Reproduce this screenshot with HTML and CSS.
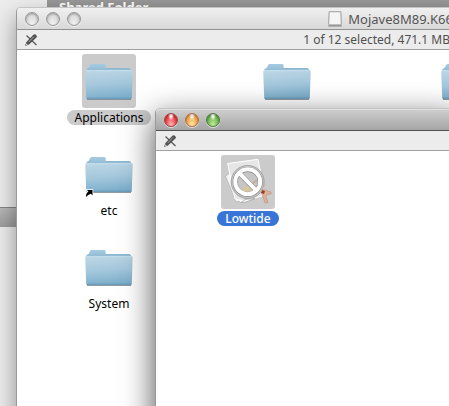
FILE: index.html
```html
<!DOCTYPE html>
<html lang="en">
<head>
  <meta charset="UTF-8" />
  <meta name="viewport" content="width=device-width, initial-scale=1.0" />
  <title>Lowtide</title>
  <link rel="stylesheet" href="styles.css">
</head>
<body>
  <!-- shared icons -->
  <svg class="defs" width="0" height="0" aria-hidden="true">
    <defs>
      <linearGradient id="folderBack" x1="0" y1="0" x2="0" y2="1">
        <stop offset="0" stop-color="#a6cbe0" />
        <stop offset="1" stop-color="#86b3cf" />
      </linearGradient>
      <linearGradient id="folderFront" x1="0.3" y1="0" x2="0.45" y2="1">
        <stop offset="0" stop-color="#bcd6e4" />
        <stop offset="0.5" stop-color="#a4c7dc" />
        <stop offset="1" stop-color="#7aadca" />
      </linearGradient>
      <symbol id="folder" viewBox="0 0 54 54">
        <path d="M5 45.300h44" stroke="#77838a" />
        <path d="M4.500 17V15l2.300-1.200 1.300-2.800q.5-1 1.500-1h12.600q1.500 0 1.500 1.500V14h23.500q1.600 0 1.900 1.500V20h-44.600z" fill="url(#folderBack)" />
        <path d="M24 14.500h23" stroke="#8bb7d1" />
        <path d="M3.200 17.600q.2-1.600 1.700-1.600h44.400q1.600 0 1.400 1.600l-.9 26.400q0 1-1 1H5.200q-1 0-1-1z" fill="url(#folderFront)" />
        <path d="M4 16.700h46" stroke="#c6e0ee" stroke-width=".8" />
        <path d="M4.800 44.200h44.400" stroke="#6497b4" />
      </symbol>
      <symbol id="pencil" viewBox="0 0 12 12">
        <path d="M1.500 1.500l10 9.500" stroke="#5a5a5a" stroke-width="1.300" />
        <path d="M0 12l1.400-4 7-7.200Q9.200 0 10.200.3l1.500 1.400q.5.900-.3 1.800L4 10.400z" fill="#505050" />
        <path d="M3.500 8.200l5.500-5.700" stroke="#a4a4a4" />
        <path d="M1.300 9.200l1.500 1.300-2 .7z" fill="#d8d8d8" />
      </symbol>
    </defs>
  </svg>

  <div class="desktop">
    <div class="backdrop">
      <div class="sidebar"></div>
      <div class="shared-title">Shared Folder</div>
    </div>
    <div class="back-bar"></div>

    <section class="window window-disk">
      <header class="titlebar">
        <div class="lights">
          <button class="light" aria-label="Close"></button>
          <button class="light" aria-label="Minimize"></button>
          <button class="light" aria-label="Zoom"></button>
        </div>
        <div class="title">
          <svg class="disk" viewBox="0 0 14 16">
            <path d="M1 .5h12l.7 13.200v1.800H.3v-1.800z" fill="#c9c9c9" stroke="#a7a7a7" stroke-width=".8" />
            <path d="M2 1.500h10l.5 11.500h-11z" fill="#f5f5f5" />
            <path d="M1 14.300h12" stroke="#8c8c8c" />
          </svg>
          <span>Mojave8M89.K66</span>
        </div>
      </header>
      <div class="toolbar">
        <button class="tool" aria-label="Read only"><svg><use href="#pencil" /></svg></button>
        <span class="status">1 of 12 selected, 471.1 MB</span>
      </div>
      <div class="files">
        <div class="file selected">
          <svg class="icon"><use href="#folder" /></svg>
          <span class="name">Applications</span>
        </div>
        <div class="file"><svg class="icon"><use href="#folder" /></svg></div>
        <div class="file"><svg class="icon"><use href="#folder" /></svg></div>
        <div class="file first">
          <svg class="icon" viewBox="0 0 54 54">
            <use href="#folder" />
            <path d="M4 50q-.3-4 2.500-5.500L5 43h5.500v5.500L8.900 46.700Q6 47.500 4 50z" fill="#000" stroke="#fff" stroke-width="1.500" paint-order="stroke" />
          </svg>
          <span class="name">etc</span>
        </div>
        <div class="file first">
          <svg class="icon"><use href="#folder" /></svg>
          <span class="name">System</span>
        </div>
      </div>
    </section>

    <section class="window window-app active">
      <header class="titlebar">
        <div class="lights">
          <button class="light red" aria-label="Close"></button>
          <button class="light yellow" aria-label="Minimize"></button>
          <button class="light green" aria-label="Zoom"></button>
        </div>
      </header>
      <div class="toolbar">
        <button class="tool" aria-label="Read only"><svg><use href="#pencil" /></svg></button>
      </div>
      <div class="files">
        <div class="file selected">
          <svg class="icon" viewBox="0 0 54 54">
            <!-- papers -->
            <path d="M4.500 21L9 18l14 27-3 3-2-2-3 1z" fill="#f4f4f4" stroke="#aaa" stroke-width=".6" />
            <path d="M6.700 8.500L37 4.300 44 40l-21 6-9-2z" fill="#e6e6e6" stroke="#fff" />
            <path d="M20 47.500l4-3 10-1-9 3.500z" fill="#fafafa" stroke="#999" stroke-width=".6" />
            <!-- brush and clamp -->
            <path d="M40 36l3-2 3 2 4 1v2l-4 .5-1 2 2 6-3 .5-3-9z" fill="#dcb09a" stroke="#c08f78" stroke-width=".6" />
            <path d="M41 35l3 1-1 3-3-1z" fill="#973f22" />
            <path d="M38 24l6 9" stroke="#e0b79b" />
            <circle cx="26.700" cy="27" r="16.500" fill="#c6c6c6" stroke="#a4a4a4" />
            <path d="M21 33l7-3 5 6-6 3-5-3z" fill="#d8c6a0" />
            <path d="M31 29l5-4M34 32l3-2" stroke="#cfa08c" stroke-width="1.500" />
            <!-- prohibited sign -->
            <g fill="none" stroke="#808080" stroke-width="5">
              <circle cx="26.700" cy="26.900" r="12.500" />
              <path d="M18.200 18.200l17 17.400" />
            </g>
            <g fill="none" stroke="#fff" stroke-width="4">
              <circle cx="26.700" cy="26.700" r="12.500" />
              <path d="M18.200 18l17 17.400" />
            </g>
          </svg>
          <span class="name">Lowtide</span>
        </div>
      </div>
    </section>
  </div>
</body>
</html>
```

FILE: styles.css
```css
body {
  margin: 0;
  font-family: "Lucida Grande", "Noto Sans", "Open Sans", sans-serif;
  font-size: 12px;
  color: #000;
}

.defs {
  position: absolute;
}

.desktop {
  position: relative;
  height: 100vh;
  overflow: hidden;
  background: #ececec;
}

.backdrop {
  display: flex;
  height: 20px;
}

.sidebar {
  width: 47px;
}

.shared-title {
  flex: 1;
  padding-left: 12px;
  background: linear-gradient(#999, #8a8a8a);
  color: #fff;
  font-size: 13px;
  font-weight: 700;
  line-height: 15px;
}

.back-bar {
  position: absolute;
  top: 207px;
  left: 0;
  width: 40px;
  height: 19px;
  border-top: 1px solid #858585;
  background: linear-gradient(#b8b8b8, #9c9c9c);
}

.window {
  position: absolute;
  bottom: -40px;
  border: 1px solid #999;
  border-top-color: #c4c4c4;
  border-radius: 5px 5px 0 0;
  background: #fff;
  box-shadow: 0 10px 22px rgba(0, 0, 0, 0.4);
}

.window-disk {
  top: 7px;
  left: 16px;
  right: -10px;
}

.window-app {
  top: 108px;
  left: 155px;
  right: -10px;
}

.window.active {
  box-shadow: 0 10px 32px rgba(0, 0, 0, 0.7);
}

.titlebar {
  display: flex;
  justify-content: space-between;
  align-items: center;
  height: 21px;
  padding: 0 5px 0 8px;
  border-bottom: 1px solid #929292;
  border-radius: 4px 4px 0 0;
  background: linear-gradient(#f0f0f0, #d8d8d8);
}

.active .titlebar {
  border-bottom-color: #515151;
  background: linear-gradient(#d0d0d0, #a5a5a5);
  box-shadow: inset 0 1px #e0e0e0;
}

.lights {
  display: flex;
  gap: 7px;
}

.light {
  width: 14px;
  height: 14px;
  padding: 0;
  border: 1px solid #999;
  border-radius: 50%;
  background: radial-gradient(ellipse at 50% 100%, #f4f4f4, #d2d2d2 80%);
  box-shadow: inset 0 1px 2px rgba(0, 0, 0, 0.3), 0 1px rgba(255, 255, 255, 0.6);
}

.light.red {
  border-color: #a84444;
  background: radial-gradient(ellipse at 50% 10%, #fff 0 10%, transparent 35%), radial-gradient(ellipse at 50% 100%, #ffc3c3, #e8343b 70%);
}

.light.yellow {
  border-color: #b56d40;
  background: radial-gradient(ellipse at 50% 10%, #fff 0 10%, transparent 35%), radial-gradient(ellipse at 50% 100%, #fff0a0, #eb9440 80%);
}

.light.green {
  border-color: #4f7f42;
  background: radial-gradient(ellipse at 50% 10%, #fff 0 10%, transparent 35%), radial-gradient(ellipse at 50% 100%, #c8f0a0, #5caa43 80%);
}

.title {
  display: flex;
  align-items: center;
  gap: 6px;
  color: #555;
  font-size: 13px;
  line-height: 20px;
  white-space: nowrap;
}

.disk {
  width: 14px;
  height: 16px;
}

.toolbar {
  display: flex;
  justify-content: space-between;
  align-items: center;
  height: 19px;
  padding: 0 8px;
  border-bottom: 1px solid #a0a0a0;
  background: #ececec;
}

.tool {
  display: flex;
  padding: 0;
  border: 0;
  background: none;
}

.tool svg {
  width: 12px;
  height: 12px;
}

.status {
  color: #505050;
  line-height: 19px;
  white-space: nowrap;
}

.files {
  display: grid;
  grid-template-columns: repeat(3, 178px);
  grid-auto-rows: 93px;
  padding: 4px 3px;
  overflow: hidden;
}

.file {
  display: flex;
  flex-direction: column;
  align-items: center;
  gap: 2px;
}

.file.first {
  grid-column: 1;
}

.icon {
  width: 54px;
  height: 54px;
  border-radius: 3px;
}

.name {
  padding: 0 8px;
  border-radius: 8px;
  line-height: 15px;
}

.selected .icon,
.selected .name {
  background: #cbcbcb;
}

.active .selected .name {
  background: #3875d7;
  color: #fff;
  font-weight: 500;
}
```
